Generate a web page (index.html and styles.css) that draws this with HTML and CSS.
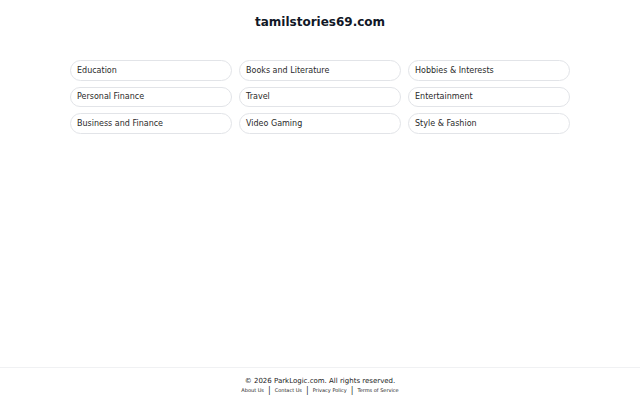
FILE: index.html
```html
<!DOCTYPE html>
<html lang="en">
<head>
<meta charset="utf-8">
<title>tamilstories69.com</title>
<link rel="stylesheet" href="styles.css">
</head>
<body>
<div class="page">
  <main class="main">
    <h1 class="title">tamilstories69.com</h1>
    <div class="grid">
      <a class="pill" href="#">Education</a>
      <a class="pill" href="#">Books and Literature</a>
      <a class="pill" href="#">Hobbies &amp; Interests</a>
      <a class="pill" href="#">Personal Finance</a>
      <a class="pill" href="#">Travel</a>
      <a class="pill" href="#">Entertainment</a>
      <a class="pill" href="#">Business and Finance</a>
      <a class="pill" href="#">Video Gaming</a>
      <a class="pill" href="#">Style &amp; Fashion</a>
    </div>
  </main>
  <footer class="footer">
    <div class="copy">© 2026 ParkLogic.com. All rights reserved.</div>
    <div class="links">
      <a href="#">About Us</a><span class="sep">|</span><a href="#">Contact Us</a><span class="sep">|</span><a href="#">Privacy Policy</a><span class="sep">|</span><a href="#">Terms of Service</a>
    </div>
  </footer>
</div>
</body>
</html>
```
FILE: styles.css
```css
html, body {
  margin: 0;
  padding: 0;
  background: #ffffff;
  font-family: "DejaVu Sans", sans-serif;
  color: #222;
}
.page {
  min-height: 400px;
  display: flex;
  flex-direction: column;
}
.main {
  flex: 1;
  display: flex;
  flex-direction: column;
  align-items: center;
}
.title {
  margin: 15px 0 0 0;
  font-size: 12px;
  line-height: 15px;
  font-weight: bold;
  color: #111827;
}
.grid {
  margin-top: 30px;
  width: 500px;
  display: grid;
  grid-template-columns: repeat(3, 1fr);
  column-gap: 7px;
  row-gap: 6px;
}
.pill {
  display: flex;
  align-items: center;
  height: 18.5px;
  padding: 0 6px;
  border: 1px solid #e2e4e8;
  border-radius: 11px;
  font-size: 8px;
  color: #2a2a2a;
  text-decoration: none;
}
.footer {
  border-top: 1px solid #f0f1f3;
  padding: 8px 0 5px 0;
  text-align: center;
  color: #222;
}
.copy {
  font-size: 7px;
  line-height: 10px;
}
.links {
  font-size: 5px;
  line-height: 8px;
}
.links a {
  color: #222;
  text-decoration: none;
}
.sep {
  font-size: 8px;
  margin: 0 4px;
  vertical-align: middle;
  color: #333;
}
```
